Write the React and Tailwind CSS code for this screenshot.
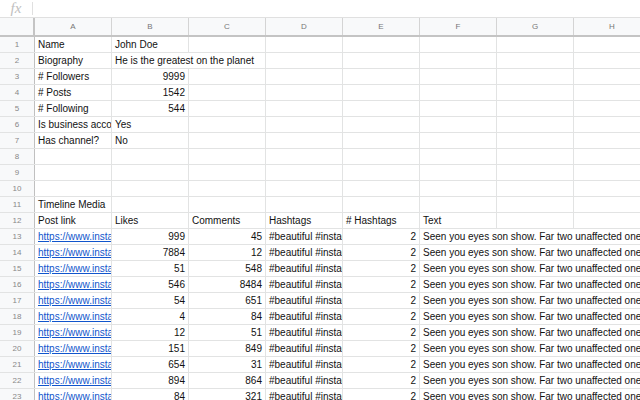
import React from "react";

const COLS = ["A", "B", "C", "D", "E", "F", "G", "H"];

const top = [
  ["Name", "John Doe"],
  ["Biography", "He is the greatest on the planet", null, "span2"],
  ["# Followers", "9999", "num"],
  ["# Posts", "1542", "num"],
  ["# Following", "544", "num"],
  ["Is business account?", "Yes"],
  ["Has channel?", "No"],
];

const data = [
  [999, 45],
  [7884, 12],
  [51, 548],
  [546, 8484],
  [54, 651],
  [4, 84],
  [12, 51],
  [151, 849],
  [654, 31],
  [894, 864],
  [84, 321],
];

function Cell({ span = 1, align = "left", children }) {
  const w = span === 1 ? "w-[77px]" : span === 2 ? "w-[154px]" : "w-[231px]";
  return (
    <div
      className={`${w} shrink-0 h-full border-r border-[#e2e3e3] overflow-hidden whitespace-nowrap px-[3px] leading-[15px] ${
        align === "right" ? "text-right" : "text-left"
      }`}
    >
      {children}
    </div>
  );
}

function Row({ n, children }) {
  return (
    <div className="flex h-[16px] border-b border-[#e2e3e3] shrink-0">
      <div className="w-[35px] shrink-0 bg-[#f8f9fa] border-r border-[#c0c0c0] text-[8px] text-[#888] flex items-center justify-center leading-none">
        {n}
      </div>
      {children}
    </div>
  );
}

export default function App() {
  const rows = [];
  top.forEach((r, i) => {
    const [a, b, kind, span] = r;
    rows.push(
      <Row n={i + 1} key={"t" + i}>
        <Cell>{a}</Cell>
        {span === "span2" ? (
          <Cell span={2}>{b}</Cell>
        ) : (
          <Cell align={kind === "num" ? "right" : "left"}>{b}</Cell>
        )}
        {Array.from({ length: span === "span2" ? 5 : 6 }).map((_, j) => (
          <Cell key={j} />
        ))}
      </Row>
    );
  });
  [8, 9, 10].forEach((n) =>
    rows.push(
      <Row n={n} key={"e" + n}>
        {COLS.map((c) => (
          <Cell key={c} />
        ))}
      </Row>
    )
  );
  rows.push(
    <Row n={11} key="r11">
      <Cell>Timeline Media</Cell>
      {COLS.slice(1).map((c) => (
        <Cell key={c} />
      ))}
    </Row>
  );
  rows.push(
    <Row n={12} key="r12">
      <Cell>Post link</Cell>
      <Cell>Likes</Cell>
      <Cell>Comments</Cell>
      <Cell>Hashtags</Cell>
      <Cell># Hashtags</Cell>
      <Cell>Text</Cell>
      <Cell />
      <Cell />
    </Row>
  );
  data.forEach(([likes, comments], i) => {
    rows.push(
      <Row n={13 + i} key={"d" + i}>
        <Cell>
          <span className="text-[#1155cc] underline">https://www.instagram.com/p/B</span>
        </Cell>
        <Cell align="right">{likes}</Cell>
        <Cell align="right">{comments}</Cell>
        <Cell>#beautiful #instagood #photo</Cell>
        <Cell align="right">2</Cell>
        <Cell span={3}>
          Seen you eyes son show. Far two unaffected one alteration
        </Cell>
      </Row>
    );
  });

  return (
    <div
      className="w-[640px] h-[400px] overflow-hidden bg-white text-[10px] text-[#111] flex flex-col"
      style={{ fontFamily: '"Liberation Sans", Arial, sans-serif' }}
    >
      <div className="h-[18px] shrink-0 border-b border-[#e0e0e0] flex items-stretch">
        <div className="w-[33px] shrink-0 flex items-center justify-center border-r border-[#e0e0e0] my-[2px]">
          <span
            className="italic text-[#c0c0c0] text-[15px] leading-none"
            style={{ fontFamily: '"Liberation Serif", "Times New Roman", serif' }}
          >
            fx
          </span>
        </div>
        <div className="flex-1" />
      </div>
      <div className="h-[19px] shrink-0 flex bg-[#f8f9fa] border-b-2 border-[#c4c4c4]">
        <div className="w-[35px] shrink-0 border-r-2 border-[#c4c4c4]" />
        {COLS.map((c) => (
          <div
            key={c}
            className="w-[77px] shrink-0 border-r border-[#d4d4d4] text-[8px] text-[#777] flex items-center justify-center leading-none"
          >
            {c}
          </div>
        ))}
      </div>
      {rows}
    </div>
  );
}
